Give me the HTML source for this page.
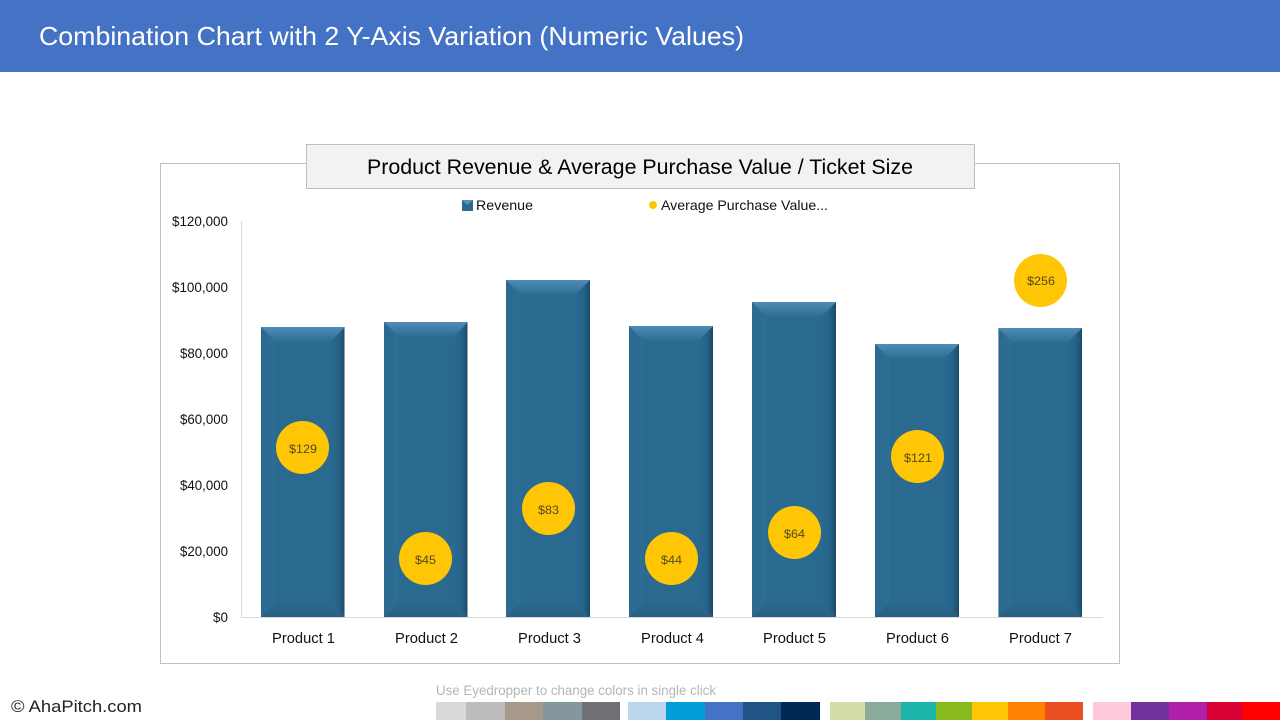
<!DOCTYPE html>
<html><head><meta charset="utf-8">
<style>
html,body{margin:0;padding:0;background:#fff;width:1280px;height:720px;overflow:hidden}
svg{display:block}
text{font-family:"Liberation Sans",sans-serif}
</style></head>
<body>
<svg width="1280" height="720" viewBox="0 0 1280 720" xmlns="http://www.w3.org/2000/svg">
<defs>
<linearGradient id="t" x1="0" y1="0" x2="0" y2="1"><stop offset="0" stop-color="#4f8cb6"/><stop offset="1" stop-color="#2c6c92"/></linearGradient>
<linearGradient id="l" x1="0" y1="0" x2="1" y2="0"><stop offset="0" stop-color="#2c6a90"/><stop offset="1" stop-color="#2d6d94"/></linearGradient>
<linearGradient id="r" x1="0" y1="0" x2="1" y2="0"><stop offset="0" stop-color="#2a6a90"/><stop offset="0.55" stop-color="#27648a"/><stop offset="1" stop-color="#1c4b69"/></linearGradient>
<linearGradient id="b" x1="0" y1="0" x2="0" y2="1"><stop offset="0" stop-color="#2a6a90"/><stop offset="1" stop-color="#285f82"/></linearGradient>
</defs>
<rect x="0" y="0" width="1280" height="72" fill="#4472c4"/>
<text x="39" y="45" font-size="26" fill="#fff" textLength="705" lengthAdjust="spacingAndGlyphs">Combination Chart with 2 Y-Axis Variation (Numeric Values)</text>

<rect x="160.500" y="163.500" width="959" height="500" fill="#fff" stroke="#bfbfbf"/>
<rect x="306.500" y="144.500" width="668" height="44" fill="#f2f2f2" stroke="#bfbfbf"/>
<text x="367" y="174" font-size="21" fill="#000" textLength="546" lengthAdjust="spacingAndGlyphs">Product Revenue &amp; Average Purchase Value / Ticket Size</text>

<rect x="462" y="200" width="11" height="11" fill="#2a6a90"/>
<polygon points="462,200 473,200 467.500,205" fill="#5593bd"/>
<text x="476" y="210" font-size="14" fill="#111" textLength="57" lengthAdjust="spacingAndGlyphs">Revenue</text>
<circle cx="653" cy="205" r="4" fill="#ffc606"/>
<text x="661" y="210" font-size="14" fill="#111" textLength="167" lengthAdjust="spacingAndGlyphs">Average Purchase Value...</text>

<g font-size="13.500" fill="#111" text-anchor="end">
<text x="228" y="226" textLength="56" lengthAdjust="spacingAndGlyphs">$120,000</text>
<text x="228" y="292" textLength="56" lengthAdjust="spacingAndGlyphs">$100,000</text>
<text x="228" y="358" textLength="48" lengthAdjust="spacingAndGlyphs">$80,000</text>
<text x="228" y="424" textLength="48" lengthAdjust="spacingAndGlyphs">$60,000</text>
<text x="228" y="490" textLength="48" lengthAdjust="spacingAndGlyphs">$40,000</text>
<text x="228" y="556" textLength="48" lengthAdjust="spacingAndGlyphs">$20,000</text>
<text x="228" y="622" textLength="15" lengthAdjust="spacingAndGlyphs">$0</text>
</g>
<path d="M241.500 221V617.500H1103" fill="none" stroke="#d9d9d9"/>

<!-- bars -->
<g>
<rect x="261" y="327" width="84" height="290" fill="#2a6a90"/>
<polygon points="261,327 276,342 276,602 261,617" fill="url(#l)"/>
<polygon points="345,327 330,342 330,602 345,617" fill="url(#r)"/>
<polygon points="261,617 276,602 330,602 345,617" fill="url(#b)"/>
<polygon points="261,327 345,327 330,342 276,342" fill="url(#t)"/>
<rect x="344" y="327" width="1" height="290" fill="#8ea3b0"/>
</g>
<g>
<rect x="384" y="322" width="84" height="295" fill="#2a6a90"/>
<polygon points="384,322 399,337 399,602 384,617" fill="url(#l)"/>
<polygon points="468,322 453,337 453,602 468,617" fill="url(#r)"/>
<polygon points="384,617 399,602 453,602 468,617" fill="url(#b)"/>
<polygon points="384,322 468,322 453,337 399,337" fill="url(#t)"/>
<rect x="467" y="322" width="1" height="295" fill="#8ea3b0"/>
</g>
<g>
<rect x="506" y="280" width="84" height="337" fill="#2a6a90"/>
<polygon points="506,280 521,295 521,602 506,617" fill="url(#l)"/>
<polygon points="590,280 575,295 575,602 590,617" fill="url(#r)"/>
<polygon points="506,617 521,602 575,602 590,617" fill="url(#b)"/>
<polygon points="506,280 590,280 575,295 521,295" fill="url(#t)"/>
</g>
<g>
<rect x="629" y="326" width="84" height="291" fill="#2a6a90"/>
<polygon points="629,326 644,341 644,602 629,617" fill="url(#l)"/>
<polygon points="713,326 698,341 698,602 713,617" fill="url(#r)"/>
<polygon points="629,617 644,602 698,602 713,617" fill="url(#b)"/>
<polygon points="629,326 713,326 698,341 644,341" fill="url(#t)"/>
</g>
<g>
<rect x="752" y="302" width="84" height="315" fill="#2a6a90"/>
<polygon points="752,302 767,317 767,602 752,617" fill="url(#l)"/>
<polygon points="836,302 821,317 821,602 836,617" fill="url(#r)"/>
<polygon points="752,617 767,602 821,602 836,617" fill="url(#b)"/>
<polygon points="752,302 836,302 821,317 767,317" fill="url(#t)"/>
</g>
<g>
<rect x="875" y="344" width="84" height="273" fill="#2a6a90"/>
<polygon points="875,344 890,359 890,602 875,617" fill="url(#l)"/>
<polygon points="959,344 944,359 944,602 959,617" fill="url(#r)"/>
<polygon points="875,617 890,602 944,602 959,617" fill="url(#b)"/>
<polygon points="875,344 959,344 944,359 890,359" fill="url(#t)"/>
</g>
<g>
<rect x="998" y="328" width="84" height="289" fill="#2a6a90"/>
<polygon points="998,328 1013,343 1013,602 998,617" fill="url(#l)"/>
<polygon points="1082,328 1067,343 1067,602 1082,617" fill="url(#r)"/>
<polygon points="998,617 1013,602 1067,602 1082,617" fill="url(#b)"/>
<polygon points="998,328 1082,328 1067,343 1013,343" fill="url(#t)"/>
<rect x="998" y="328" width="1" height="289" fill="#8ea3b0"/>
</g>

<!-- markers -->
<g fill="#ffc606">
<circle cx="302.500" cy="447.500" r="26.500"/>
<circle cx="425.500" cy="558.500" r="26.500"/>
<circle cx="548.500" cy="508.500" r="26.500"/>
<circle cx="671.500" cy="558.500" r="26.500"/>
<circle cx="794.500" cy="532.500" r="26.500"/>
<circle cx="917.500" cy="456.500" r="26.500"/>
<circle cx="1040.500" cy="280.500" r="26.500"/>
</g>
<g font-size="12" fill="#524a20" text-anchor="middle">
<text x="303" y="453" textLength="28" lengthAdjust="spacingAndGlyphs">$129</text>
<text x="425.500" y="564" textLength="21" lengthAdjust="spacingAndGlyphs">$45</text>
<text x="548.500" y="514" textLength="21" lengthAdjust="spacingAndGlyphs">$83</text>
<text x="671.500" y="564" textLength="21" lengthAdjust="spacingAndGlyphs">$44</text>
<text x="794.500" y="538" textLength="21" lengthAdjust="spacingAndGlyphs">$64</text>
<text x="918" y="462" textLength="28" lengthAdjust="spacingAndGlyphs">$121</text>
<text x="1041" y="285" textLength="28" lengthAdjust="spacingAndGlyphs">$256</text>
</g>

<g font-size="14.500" fill="#111" text-anchor="middle">
<text x="303.500" y="643" textLength="63" lengthAdjust="spacingAndGlyphs">Product 1</text>
<text x="426.500" y="643" textLength="63" lengthAdjust="spacingAndGlyphs">Product 2</text>
<text x="549.500" y="643" textLength="63" lengthAdjust="spacingAndGlyphs">Product 3</text>
<text x="672.500" y="643" textLength="63" lengthAdjust="spacingAndGlyphs">Product 4</text>
<text x="794.500" y="643" textLength="63" lengthAdjust="spacingAndGlyphs">Product 5</text>
<text x="917.500" y="643" textLength="63" lengthAdjust="spacingAndGlyphs">Product 6</text>
<text x="1040.500" y="643" textLength="63" lengthAdjust="spacingAndGlyphs">Product 7</text>
</g>

<text x="11" y="712" font-size="17" fill="#222" textLength="131" lengthAdjust="spacingAndGlyphs">© AhaPitch.com</text>
<text x="436" y="695" font-size="13.500" fill="#b5b5b5" textLength="280" lengthAdjust="spacingAndGlyphs">Use Eyedropper to change colors in single click</text>

<!-- swatches -->
<rect x="436" y="702" width="30" height="18" fill="#d9d9d9"/>
<rect x="466" y="702" width="39" height="18" fill="#bcbcbc"/>
<rect x="505" y="702" width="38" height="18" fill="#a6998c"/>
<rect x="543" y="702" width="39" height="18" fill="#84979c"/>
<rect x="582" y="702" width="38" height="18" fill="#707175"/>
<rect x="628" y="702" width="38" height="18" fill="#bcd6ee"/>
<rect x="666" y="702" width="39" height="18" fill="#009fdb"/>
<rect x="705" y="702" width="38" height="18" fill="#4472c4"/>
<rect x="743" y="702" width="38" height="18" fill="#1f5484"/>
<rect x="781" y="702" width="39" height="18" fill="#002855"/>
<rect x="830" y="702" width="35" height="18" fill="#d5dba8"/>
<rect x="865" y="702" width="36" height="18" fill="#8aab9c"/>
<rect x="901" y="702" width="35" height="18" fill="#1cb5ac"/>
<rect x="936" y="702" width="36" height="18" fill="#88b91e"/>
<rect x="972" y="702" width="36" height="18" fill="#ffc606"/>
<rect x="1008" y="702" width="37" height="18" fill="#ff8300"/>
<rect x="1045" y="702" width="38" height="18" fill="#e84e1f"/>
<rect x="1093" y="702" width="38" height="18" fill="#fec9d9"/>
<rect x="1131" y="702" width="38" height="18" fill="#70339e"/>
<rect x="1169" y="702" width="38" height="18" fill="#b11eac"/>
<rect x="1207" y="702" width="35" height="18" fill="#d80032"/>
<rect x="1242" y="702" width="38" height="18" fill="#ff0000"/>
</svg>
</body></html>
